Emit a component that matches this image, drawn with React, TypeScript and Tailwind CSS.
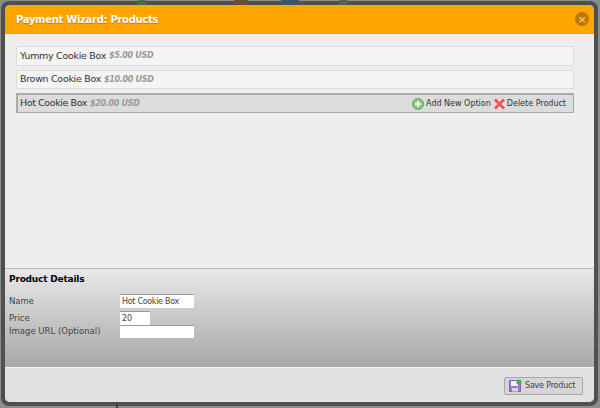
import React from 'react';

const font = "font-['Verdana','DejaVu_Sans',sans-serif]";

const products = [
    { name: 'Yummy Cookie Box', price: '$5.00 USD', height: 'h-[20px]' },
    { name: 'Brown Cookie Box', price: '$10.00 USD', height: 'h-[19px]' },
];

const PlusIcon = () => (
    <svg width="12" height="12" viewBox="0 0 12 12">
        <circle cx="6" cy="6" r="5.5" fill="#86c67a" stroke="#6aa85e" />
        <path d="M6 3v6M3 6h6" stroke="#ffffff" strokeWidth="2" />
    </svg>
);

const CrossIcon = () => (
    <svg width="11" height="12" viewBox="0 0 11 12">
        <path d="M1 1.5l9 9M10 1.5l-9 9" stroke="#f2525c" strokeWidth="2.8" />
    </svg>
);

const SaveIcon = () => (
    <svg width="13" height="13" viewBox="0 0 13 13">
        <rect x="0.5" y="1.5" width="11" height="11" fill="#a878cc" stroke="#9060b8" />
        <rect x="2" y="2" width="7" height="5" fill="#f3f0f6" />
        <rect x="3" y="9" width="6" height="3.5" fill="#dccfe8" />
        <circle cx="10" cy="3" r="2.6" fill="#3fb54a" />
    </svg>
);

export default function App() {
    return (
        <div className={`relative w-[600px] h-[408px] bg-[#8c8c8c] overflow-hidden ${font}`}>
            <div className="w-[597px] h-[405px] mt-[1px] ml-[1px] p-[4px] rounded-[8px] bg-[#505050]">
                <div className="h-[397px] flex flex-col rounded-[5px] overflow-hidden bg-[#eeeeee]">
                    <div className="h-[29px] shrink-0 flex items-center justify-between pl-[11px] pr-[5px] bg-[#ffa500] border-b border-[#e8983a]">
                        <span className="text-[10px] tracking-[-0.3px] font-bold text-white [text-shadow:0_1px_1px_#b87808]">Payment Wizard: Products</span>
                        <span className="w-[14px] h-[14px] rounded-full bg-[#b87808] flex items-center justify-center text-[#f4c060] text-[11px] font-bold leading-none">×</span>
                    </div>
                    <div className="flex-1 flex flex-col gap-[4px] pt-[12px] pl-[11px] pr-[20px]">
                        {products.map(p => (
                            <div key={p.name} className={`${p.height} flex items-center pl-[3px] bg-[#f4f4f4] border border-[#dddddd] text-[9.5px] tracking-[-0.3px] text-[#333333]`}>
                                {p.name}
                                <span className="ml-[3px] text-[8px] tracking-[-0.3px] font-bold italic text-[#999999]">{p.price}</span>
                            </div>
                        ))}
                        <div className="h-[20px] flex items-center justify-between pl-[2px] pr-[7px] bg-[#dcdcdc] border border-t-2 border-l-2 border-[#aaaaaa] text-[9.5px] tracking-[-0.4px] text-[#333333]">
                            <span>
                                Hot Cookie Box
                                <span className="ml-[3px] text-[8px] tracking-[-0.3px] font-bold italic text-[#999999]">$20.00 USD</span>
                            </span>
                            <span className="flex items-center gap-[2px] text-[8px] tracking-normal">
                                <PlusIcon />
                                <span className="mr-[1px]">Add New Option</span>
                                <CrossIcon />
                                <span>Delete Product</span>
                            </span>
                        </div>
                    </div>
                    <div className="h-[99px] shrink-0 pt-[4px] pl-[4px] border-t border-[#bbbbbb] bg-gradient-to-b from-[#e8e8e8] to-[#a8a8a8]">
                        <h3 className="text-[9px] tracking-[-0.2px] font-bold text-black">Product Details</h3>
                        <div className="mt-[7px] grid grid-cols-[111px_1fr] text-[8.5px] text-[#444444]">
                            <label className="h-[17px] leading-[14px]">Name</label>
                            <div className="h-[17px]"><input readOnly value="Hot Cookie Box" className="block w-[74px] h-[14px] px-[2px] bg-white text-[8px] tracking-[-0.3px] border-t border-[#999999] outline-none" /></div>
                            <label className="h-[14px] leading-[15px]">Price</label>
                            <div className="h-[14px]"><input readOnly value="20" className="block w-[30px] h-[14px] px-[2px] bg-white text-[8px] border-t border-[#999999] outline-none" /></div>
                            <label className="leading-[13px]">Image URL (Optional)</label>
                            <div><input readOnly value="" className="block w-[74px] h-[13px] px-[2px] bg-white border-t border-[#999999] outline-none" /></div>
                        </div>
                    </div>
                    <div className="h-[35px] shrink-0 flex items-center justify-end pr-[11px] pt-[1px] border-t border-[#f4f4f4] bg-[#e2e2e2]">
                        <button className="h-[18px] w-[79px] flex items-center gap-[3px] pl-[4px] rounded-[2px] border border-[#a8a8a8] bg-[#d6d6d6] text-[8px] tracking-[-0.2px] whitespace-nowrap text-[#444444]">
                            <SaveIcon />
                            Save Product
                        </button>
                    </div>
                </div>
            </div>
            <span className="absolute top-0 left-[138px] w-[8px] h-[5px] rounded-t-[2px] bg-[#4a6b4a]" />
            <span className="absolute top-0 left-[234px] w-[14px] h-[5px] rounded-b-[4px] bg-[#70493c]" />
            <span className="absolute top-0 left-[281px] w-[18px] h-[5px] bg-[#3f5568]" />
            <span className="absolute top-0 left-[339px] w-[8px] h-[5px] bg-[#566350]" />
            <span className="absolute bottom-0 left-[116px] w-[2px] h-[6px] bg-[#444444]" />
        </div>
    );
}
